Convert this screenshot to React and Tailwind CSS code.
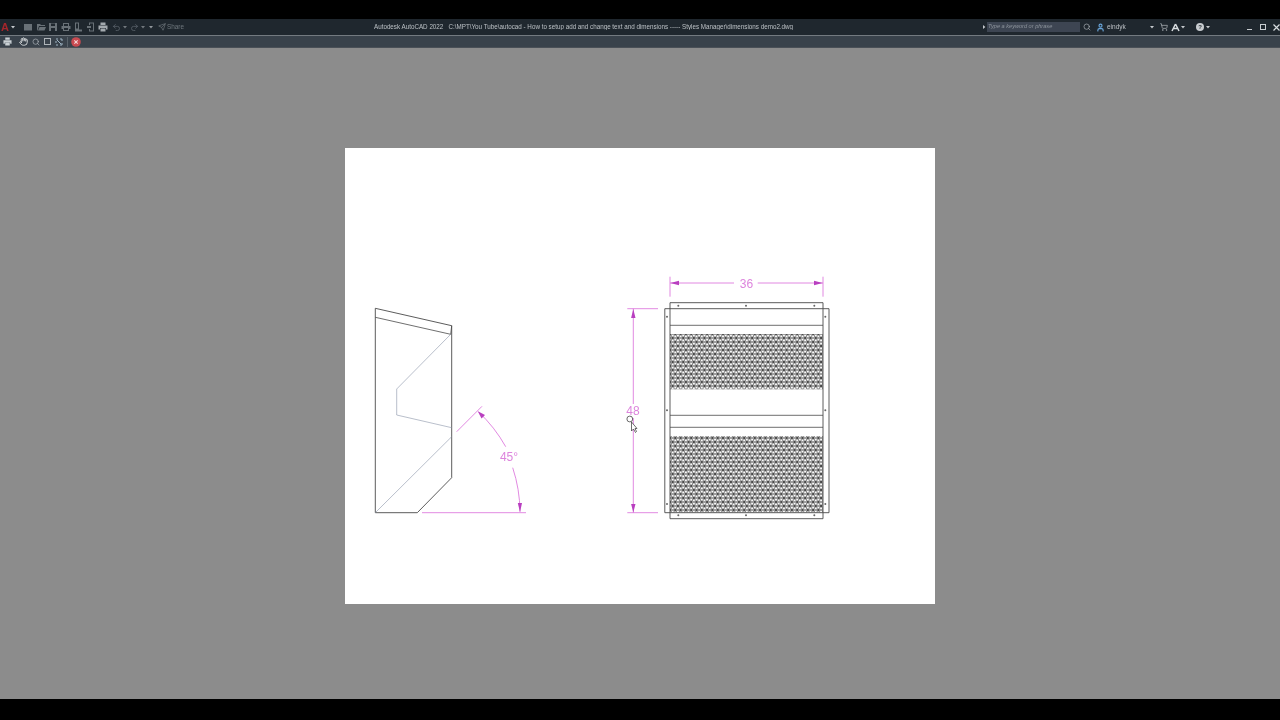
import React from 'react';
import { Hand, Search, User, ShoppingCart, Undo2, Redo2, Send } from 'lucide-react';

const Tri = ({ dir = 'down', className = '' }) => (
  <svg width="4" height="4" viewBox="0 0 4 4" className={className}>
    <path d={dir === 'down' ? 'M0 1h4L2 3.4z' : 'M1 0v4l2.4-2z'} fill="#c4c8cc" />
  </svg>
);

// tiny quick access icons, all 10px boxes
const Doc = ({ d, fill = '#697177' }) => (
  <svg width="10" height="10" viewBox="0 0 10 10">
    <path d={d} fill={fill} />
  </svg>
);

const quickIcons = [
  'M1 2h8v6.5H1z',
  'M1 2h3l1 1h4v1H3L1.500 8.500H1zM3.500 5H10L8.500 8.500H2z',
  'M1 1h8v8H1zM3 1.500v2.500h4V1.500zM3 6v3h4V6z',
  'M2 1h6v3h1.500v3H8v2H2V7H.5V4H2zM3 2v2h4V2zM3 6v2h4V6z',
  'M2 .5h4v7h3v2H2zM3 1.500v5h2v-5z',
  'M3 .5h5v9H3V7h1v1.500h3v-7H4V3H3zM1 4h4v2H1z',
];

const Printer = ({ size = 10, color = '#a3a9ae' }) => (
  <svg width={size} height={size} viewBox="0 0 10 10">
    <path d="M2.500 .5h5v2.500h-5zM.5 3.500h9v4H8V6H2v1.500H.5zM2.500 6.500h5v3h-5z" fill={color} />
  </svg>
);

const TitleBar = () => (
  <div className="flex h-[16px] items-center bg-[#1f272e] text-[#bcc1c5] blur-[0.35px]">
    <div className="flex w-[374px] shrink-0 items-center pl-[1px]">
      <span className="w-[9px] text-[11px] font-bold leading-none text-[#a5262b]">A</span>
      <Tri className="ml-[1px]" />
      <div className="ml-[8px] flex items-center gap-[2.500px]">
        {quickIcons.map((d) => (
          <Doc key={d} d={d} />
        ))}
        <Printer />
      </div>
      <Undo2 size={9} strokeWidth={2} className="ml-[4px] text-[#5d666d]" />
      <Tri className="ml-[2px] opacity-50" />
      <Redo2 size={9} strokeWidth={2} className="ml-[3px] text-[#5d666d]" />
      <Tri className="ml-[2px] opacity-50" />
      <Tri className="ml-[4px] opacity-70" />
      <Send size={8} strokeWidth={2} className="ml-[5px] text-[#6f777d]" />
      <span className="ml-[1px] text-[6.400px] leading-none text-[#6f777d]">Share</span>
    </div>
    <div className="w-[608px] shrink-0 truncate text-[6.270px] leading-none">
      Autodesk AutoCAD 2022 &nbsp;&nbsp;C:\MPT\You Tube\autocad - How to setup add and change text and dimensions ----- Styles Manager\dimensions demo2.dwg
    </div>
    <div className="flex flex-1 items-center">
      <Tri dir="right" />
      <div className="ml-[1px] flex h-[10px] w-[93px] items-center bg-[#3d4552] pl-[1px] text-[5.600px] italic leading-none text-[#8d949c]">
        Type a keyword or phrase
      </div>
      <Search size={8} strokeWidth={2} className="ml-[3px] text-[#aeb4b9]" />
      <User size={9} strokeWidth={3} className="ml-[5px] text-[#6aa7dc]" />
      <span className="ml-[2px] w-[42px] text-[6.500px] leading-none">eindyk</span>
      <Tri className="ml-[1px]" />
      <ShoppingCart size={8} strokeWidth={2.500} className="ml-[6px] text-[#9ea4a8]" />
      <svg width="9" height="9" viewBox="0 0 9 9" className="ml-[3px]">
        <path d="M4.500 1 1 8M4.500 1 8 8M2.500 5.500h4" stroke="#d8dcdf" strokeWidth="1.500" fill="none" />
      </svg>
      <Tri className="ml-[1px]" />
      <span className="ml-[11px] flex size-[8px] items-center justify-center rounded-full bg-[#c8ccd0] text-[6px] font-bold leading-none text-[#2a3238]">?</span>
      <Tri className="ml-[2px]" />
      <div className="ml-[37px] h-[1px] w-[5px] translate-y-[2px] bg-[#c8ccd0]" />
      <div className="ml-[8px] size-[6px] border border-[#c8ccd0]" />
      <svg width="7" height="7" viewBox="0 0 7 7" className="ml-[7px]">
        <path d="M.5.5l6 6M6.500.5l-6 6" stroke="#d8dcdf" strokeWidth="1.200" />
      </svg>
    </div>
  </div>
);

const PrintBar = () => (
  <div className="flex h-[11px] items-center bg-[#39424b] pl-[3px] blur-[0.35px]">
    <Printer size={9} color="#c9d0d4" />
    <Hand size={9} strokeWidth={2.500} className="ml-[7px] text-[#d4d8da]" />
    <Search size={8} strokeWidth={2} className="ml-[4px] text-[#aeb4b9]" />
    <div className="ml-[4px] size-[7px] border border-[#aeb4b9]" />
    <svg width="8" height="8" viewBox="0 0 8 8" className="ml-[4px]">
      <path d="M1 1h2M5 1h2v2M1 3v2M7 5v2H5M1 7h2M2 2l4 4" stroke="#9fb4c4" strokeWidth="1" fill="none" />
    </svg>
    <div className="ml-[4px] mr-[3px] h-[10px] w-px bg-[#59626a]" />
    <svg width="10" height="10" viewBox="0 0 9 9">
      <circle cx="4.500" cy="4.500" r="4.300" fill="#c94a50" />
      <path d="M3 3l3 3M6 3 3 6" stroke="#f3d5d6" strokeWidth="1" />
    </svg>
  </div>
);

const MAGENTA = '#d96bd9';

const SideView = () => (
  <g fill="none">
    <path d="M375.300 308.300 451.700 325.700V477.700L417.300 512.700H375.300Z" stroke="#4a4a4a" strokeWidth="0.900" />
    <path d="M375.300 317.300 450.700 334.300 451.700 325.700" stroke="#4a4a4a" strokeWidth="0.800" />
    <path d="M450.700 334.300 396.700 389V415L451.700 427.700M451.700 436.700 375.300 512.700" stroke="#8a94a8" strokeWidth="0.600" />
    <g stroke={MAGENTA} strokeWidth="0.800">
      <path d="M456.700 431.700 482 406.300M422 512.700H526" />
      <path d="M478.300 411.700A144.500 144.500 0 0 1 505.700 446.700M512.700 467.700A144.500 144.500 0 0 1 520 511.700" />
    </g>
    <path d="M477.800 411.200 485 415 481.500 418.500Z" fill="#b93fc0" />
    <path d="M520 512.300 517.800 503H522Z" fill="#b93fc0" />
  </g>
);

const FrontView = () => {
  const dots = [
    [678.3, 305.7], [746, 305.7], [814.3, 305.7],
    [678.3, 515.3], [746, 515.3], [814.3, 515.3],
    [667, 316.7], [667, 410.3], [667, 504],
    [825.3, 316.7], [825.3, 410.3], [825.3, 504],
  ];
  return (
    <g fill="none">
      <defs>
        {/* triangle lattice of the perforated sheet */}
        <pattern id="mesh" width="5.300" height="8" patternUnits="userSpaceOnUse" x="670" y="334">
          <rect width="5.300" height="8" fill="#fafafa" />
          <path d="M0 0H5.300M0 4H5.300M0 8H5.300M0 0 5.300 8M5.300 0 0 8" stroke="#333" strokeWidth="0.850" />
        </pattern>
      </defs>
      <rect x="670" y="334" width="153" height="55.300" fill="url(#mesh)" />
      <rect x="670" y="436" width="153" height="76.300" fill="url(#mesh)" />
      <path d="M670 302.700H823V518.700H670ZM664.800 308.700H829V512.700H664.800Z" stroke="#4a4a4a" strokeWidth="0.900" />
      <path d="M670 325.300H823M670 415.300H823M670 427.300H823" stroke="#4a4a4a" strokeWidth="0.800" />
      {dots.map(([x, y]) => (
        <circle key={`${x}-${y}`} cx={x} cy={y} r="1" fill="#666" />
      ))}
      <g stroke={MAGENTA} strokeWidth="0.800">
        <path d="M670 276.700V296.700M823 276.700V296.700M670 283H734M757.700 283H823" />
        <path d="M627.300 308.700H658M627.300 512.700H658M633.300 308.700V404M633.300 418V512.700" />
      </g>
      <path d="M670.300 283 679 280.800V285.200ZM822.700 283 814 280.800V285.200ZM633.300 309 631.100 318H635.500ZM633.300 512.400 631.100 504H635.500Z" fill="#b93fc0" />
    </g>
  );
};

const Cursor = () => (
  <g>
    <circle cx="629.800" cy="419" r="2.900" fill="none" stroke="#444" strokeWidth="0.800" />
    <path d="M631.500 422V431L633.500 429 635.500 432.500 636.500 431.500 635 428.500H637Z" fill="#fff" stroke="#333" strokeWidth="0.700" />
  </g>
);

const Paper = () => (
  <div className="h-[456px] w-[590px] bg-white">
    <svg viewBox="345 148 590 456" className="block h-full w-full blur-[0.35px]">
      <SideView />
      <FrontView />
      <Cursor />
      <g fill="#dd85dd" fontFamily="'Liberation Sans', sans-serif" textAnchor="middle">
        <text x="746.500" y="287.500" fontSize="12">36</text>
        <text x="633" y="415" fontSize="12">48</text>
        <text x="509" y="461" fontSize="12">45°</text>
      </g>
    </svg>
  </div>
);

const App = () => {
  return (
    <div className="flex h-[720px] w-[1280px] flex-col overflow-hidden bg-black font-['Liberation_Sans',sans-serif]">
      <div className="h-[19px] bg-black" />
      <TitleBar />
      <div className="h-px bg-[#737a80]" />
      <PrintBar />
      <div className="h-px bg-[#4a5057]" />
      <main className="flex h-[651px] justify-center bg-[#8c8c8c] pt-[100px]">
        <Paper />
      </main>
      <div className="flex-1 bg-black" />
    </div>
  );
};

export default App;
